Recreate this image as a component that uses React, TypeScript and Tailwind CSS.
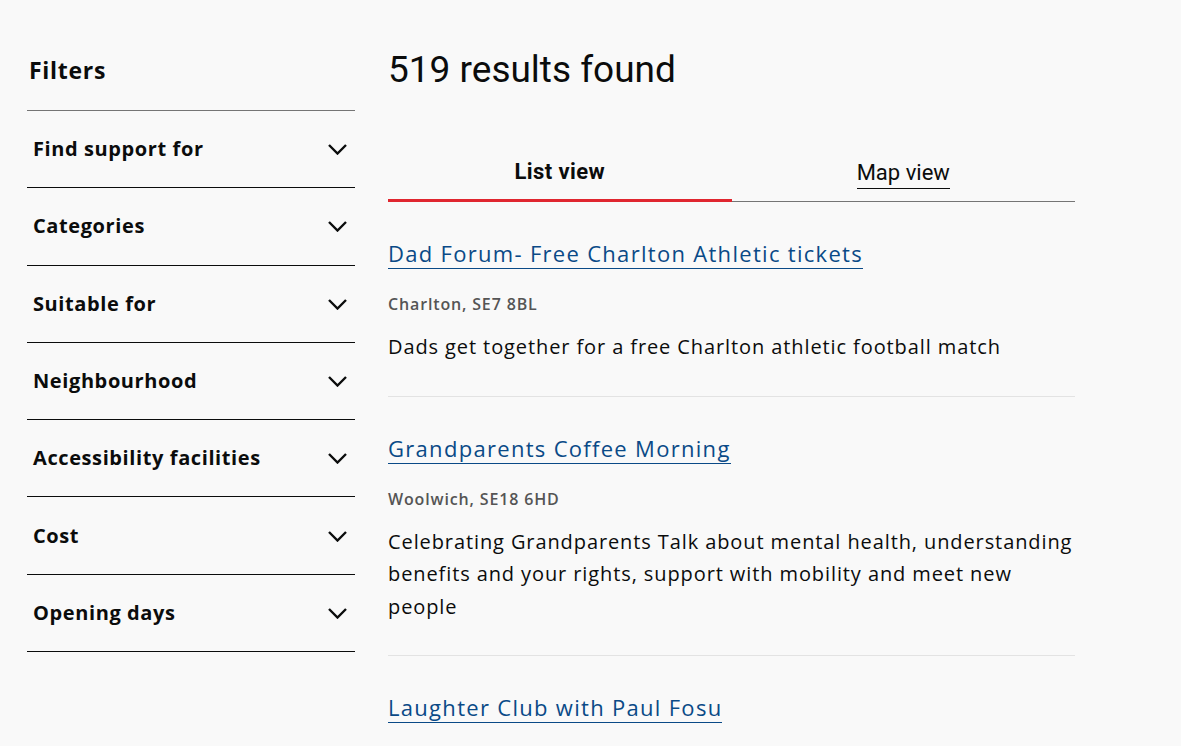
import React from "react";

const filters = [
  "Find support for",
  "Categories",
  "Suitable for",
  "Neighbourhood",
  "Accessibility facilities",
  "Cost",
  "Opening days",
];

const results = [
  {
    title: "Dad Forum- Free Charlton Athletic tickets",
    loc: "Charlton, SE7 8BL",
    desc: "Dads get together for a free Charlton athletic football match",
  },
  {
    title: "Grandparents Coffee Morning",
    loc: "Woolwich, SE18 6HD",
    desc: "Celebrating Grandparents Talk about mental health, understanding benefits and your rights, support with mobility and meet new people",
  },
  {
    title: "Laughter Club with Paul Fosu",
    loc: "",
    desc: "",
  },
];

function Chevron() {
  return (
    <svg width="21" height="12" viewBox="0 0 21 12" fill="none">
      <path d="M2 2l8.5 8.5L19 2" stroke="#0b0c0c" strokeWidth="2.4" />
    </svg>
  );
}

export default function App() {
  return (
    <div
      className="min-h-[746px] bg-[#f9f9f9] text-[#0b0c0c] overflow-hidden"
      style={{ fontFamily: "'Open Sans', 'Noto Sans', sans-serif" }}
    >
      <div className="flex gap-[33px] pl-[27px] pt-[52px]">
        <aside className="w-[328px] shrink-0">
          <h2 className="text-[23px] tracking-[0.7px] font-bold leading-[36px] pl-[2px] pb-[22px] border-b border-[#757575]">
            Filters
          </h2>
          {filters.map((f) => (
            <div
              key={f}
              className="flex items-center justify-between h-[77.3px] border-b border-[#0b0c0c] pl-[6px] pr-[7px]"
            >
              <span className="text-[20px] font-bold tracking-[0.6px]">{f}</span>
              <Chevron />
            </div>
          ))}
        </aside>
        <main className="w-[687px]">
          <h1
            className="text-[37px] leading-[36px] font-normal mt-0"
            style={{ fontFamily: "Roboto, sans-serif" }}
          >
            519 results found
          </h1>
          <div className="flex mt-[69px] border-b border-[#757575]" style={{ fontFamily: "Roboto, sans-serif" }}>
            <div className="w-1/2 flex justify-center items-start pb-[12px] border-b-[3px] border-[#e0262f] -mb-px">
              <span className="text-[22px] font-bold tracking-[0.4px] leading-[30px]">List view</span>
            </div>
            <div className="w-1/2 flex justify-center items-start pb-[12px] pt-[1px]">
              <span className="text-[22px] border-b border-[#0b0c0c] leading-[30px]">Map view</span>
            </div>
          </div>
          <div>
            {results.map((r, i) => (
              <div key={i} className={`pt-[36px] pb-[32px] ${i < 2 ? "border-b border-[#e3e3e3]" : ""}`}>
                <a className="text-[22px] tracking-[1.3px] text-[#0a4a87] border-b border-[#0a4a87] leading-[30px]">
                  {r.title}
                </a>
                {r.loc && (
                  <div className="mt-[24px] text-[16px] tracking-[0.85px] font-semibold text-[#555555]">{r.loc}</div>
                )}
                {r.desc && (
                  <p className="mt-[15px] text-[20px] tracking-[0.9px] leading-[32.5px]">{r.desc}</p>
                )}
              </div>
            ))}
          </div>
        </main>
      </div>
    </div>
  );
}
